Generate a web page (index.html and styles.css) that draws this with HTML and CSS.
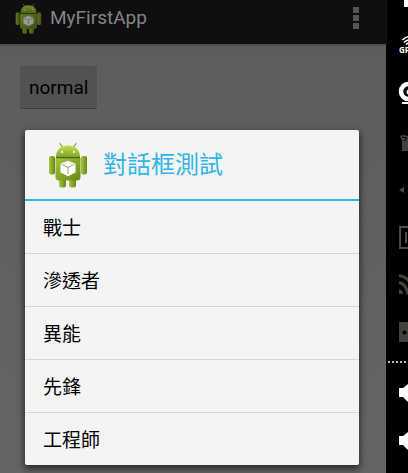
FILE: index.html
```html
<!DOCTYPE html>
<html lang="zh-Hant">
<head>
<meta charset="utf-8">
<meta name="viewport" content="width=device-width, initial-scale=1">
<title>MyFirstApp</title>
<link rel="stylesheet" href="styles.css">
</head>
<body>
<svg class="defs" aria-hidden="true">
  <defs>
    <linearGradient id="head" x1="0" y1="0" x2="0" y2="1">
      <stop offset="0" stop-color="#bfe052"/>
      <stop offset="1" stop-color="#84a526"/>
    </linearGradient>
    <linearGradient id="body" x1="0" y1="0" x2="1" y2="1">
      <stop offset="0" stop-color="#a3c63a"/>
      <stop offset="1" stop-color="#6a8818"/>
    </linearGradient>
    <linearGradient id="limb" x1="0" y1="0" x2="1" y2="0">
      <stop offset="0" stop-color="#a4c93a"/>
      <stop offset="1" stop-color="#68851a"/>
    </linearGradient>
    <symbol id="robot" viewBox="0 0 40 46">
      <path d="M12 1.500l2.500 4M28 1.500l-2.500 4" stroke="#8bab2c" stroke-width="1.200" stroke-linecap="round"/>
      <rect x="11" y="33" width="7" height="12.500" rx="2.500" fill="url(#limb)"/>
      <rect x="21" y="33" width="7" height="12.500" rx="2.500" fill="url(#limb)"/>
      <rect x="1" y="14" width="6" height="18.500" rx="2" fill="url(#limb)"/>
      <rect x="33" y="14" width="6" height="18.500" rx="2" fill="url(#limb)"/>
      <path d="M8 15C8 7.500 13 3.500 20 3.500S32 7.500 32 15Z" fill="url(#head)"/>
      <path d="M7.500 16h25v19q0 3.500-3.500 3.500H11q-3.500 0-3.500-3.500z" fill="url(#body)"/>
      <path d="M8 15h24v1.200H8z" fill="#4a6210"/>
      <circle cx="14" cy="10" r="1.100" fill="#fff"/>
      <circle cx="26" cy="10" r="1.100" fill="#fff"/>
      <path d="M20 18.800l7.500 3v8.700L20 34.200l-7.500-3.700v-8.700z" fill="#fff"/>
      <path d="M13.500 22.300l6.500 3.200 6.500-3.200M20 25.500v6.500" fill="none" stroke="#7b8f45" stroke-width=".8"/>
    </symbol>
  </defs>
</svg>
<div class="emulator">
  <main class="app">
    <header class="bar">
      <svg class="bar-icon" aria-hidden="true"><use href="#robot"/></svg>
      <h1 class="bar-title">MyFirstApp</h1>
      <button class="overflow" type="button" aria-label="More options"><i></i><i></i><i></i></button>
    </header>
    <div class="content">
      <button class="normal" type="button">normal</button>
    </div>
    <section class="dialog" role="dialog" aria-labelledby="dialog-title">
      <div class="dialog-head">
        <svg class="dialog-icon" aria-hidden="true"><use href="#robot"/></svg>
        <h2 class="dialog-title" id="dialog-title">對話框測試</h2>
      </div>
      <ul class="options">
        <li><button type="button">戰士</button></li>
        <li><button type="button">滲透者</button></li>
        <li><button type="button">異能</button></li>
        <li><button type="button">先鋒</button></li>
        <li><button type="button">工程師</button></li>
      </ul>
    </section>
  </main>
  <aside class="rail">
    <button class="tool tool-first" type="button" aria-label="Battery">
      <svg viewBox="0 0 22 20"><path d="M18 0h10v7H18z" fill="#fff"/></svg>
    </button>
    <button class="tool" type="button" aria-label="Location">
      <svg viewBox="0 0 22 48">
        <g fill="none" stroke="#fff" stroke-width="1.500"><path d="M16.500 20q3-3.500 8-3.500M18 22.500q3-3 7-3M20 24.500q2-2 5-2"/></g>
        <text x="13" y="33" class="gps">GPS</text>
      </svg>
    </button>
    <button class="tool" type="button" aria-label="Camera">
      <svg viewBox="0 0 22 48">
        <circle cx="22.500" cy="23.500" r="7.500" fill="none" stroke="#fff" stroke-width="4.500"/>
        <circle cx="23" cy="24" r="2.500" fill="#fff"/>
        <path d="M16 34h10v2H16z" fill="#fff"/>
      </svg>
    </button>
    <button class="tool" type="button" aria-label="Screen capture">
      <svg viewBox="0 0 22 48"><path d="M16 35V24l-2-4 3-1 5 1v15z" fill="#42423d"/><path d="M16 21l5 1-3 3" fill="none" stroke="#000"/></svg>
    </button>
    <button class="tool" type="button" aria-label="Remote control">
      <svg viewBox="0 0 22 48"><path d="M13 26l5-3v6z" fill="#4a4a46"/></svg>
    </button>
    <button class="tool" type="button" aria-label="Identifiers">
      <svg viewBox="0 0 22 48"><g fill="none" stroke="#4a4a46" stroke-width="2"><path d="M24 15H14v21h10M20 20v11"/></g></svg>
    </button>
    <button class="tool" type="button" aria-label="Network">
      <svg viewBox="0 0 22 48"><g fill="none" stroke="#42423d" stroke-width="3"><path d="M13 15.500q10 1 16 15M13 22.500q7 1 9 12"/></g><path d="M13 29q4 1 4 5h-4z" fill="#42423d"/></svg>
    </button>
    <button class="tool" type="button" aria-label="Multi-touch">
      <svg viewBox="0 0 22 48"><path d="M13 14h9v20h-9z" fill="#42423d"/><circle cx="18.500" cy="24.500" r="2" fill="#000"/></svg>
    </button>
    <div class="divider"></div>
    <button class="tool" type="button" aria-label="Volume up">
      <svg viewBox="0 0 22 48"><path d="M13 19h4l5-4v18l-5-5h-4z" fill="#fff"/></svg>
    </button>
    <button class="tool" type="button" aria-label="Volume down">
      <svg viewBox="0 0 22 48"><path d="M13 19h4l5-4v18l-5-5h-4z" fill="#fff"/></svg>
    </button>
  </aside>
</div>
</body>
</html>
```
FILE: styles.css
```css
* { box-sizing: border-box; }

body {
  margin: 0;
  font-family: Roboto, "Noto Sans CJK TC", sans-serif;
}

button {
  padding: 0;
  border: 0;
  background: none;
  font: inherit;
  color: inherit;
}

svg { display: block; }

.defs {
  position: absolute;
  width: 0;
  height: 0;
}

.emulator {
  display: grid;
  grid-template-columns: 1fr 22px;
  height: 100vh;
  overflow: hidden;
}

.app {
  position: relative;
  background: linear-gradient(#5c5c5c, #656565);
}

.bar {
  display: flex;
  align-items: center;
  height: 44px;
  padding: 0 27px 8px 15px;
  background: #0f0f0f;
  box-shadow: 0 1px 2px #404040;
}

.bar-icon {
  width: 27px;
  height: 31px;
  filter: brightness(0.6);
}

.bar-title {
  flex: 1;
  margin: 0 0 0 8px;
  font-size: 19px;
  font-weight: 400;
  line-height: 24px;
  color: #858585;
}

.overflow {
  display: grid;
  gap: 2px;
}

.overflow i {
  width: 6px;
  height: 6px;
  background: #555;
}

.content { padding: 22px 20px; }

.normal {
  padding: 2px 9px 0;
  border-bottom: 1px solid #3d3d3d;
  border-radius: 2px;
  background: #525252;
  box-shadow: 0 0 1px #6d6d6d;
  font-size: 19px;
  line-height: 40px;
  color: #000;
}

.dialog {
  position: absolute;
  top: 130px;
  left: 25px;
  right: 27px;
  border-radius: 2px;
  background: #f4f4f4;
  box-shadow: 0 3px 7px 1px rgba(0, 0, 0, 0.6);
  color: #000;
}

.dialog-head {
  display: flex;
  align-items: center;
  height: 71px;
  padding: 0 23px;
  border-bottom: 2px solid #33b5e5;
}

.dialog-icon {
  width: 40px;
  height: 46px;
}

.dialog-title {
  margin: 0 0 0 15px;
  font-size: 24px;
  font-weight: 400;
  line-height: 32px;
  color: #33b5e5;
}

.options {
  margin: 0;
  padding: 0;
  list-style: none;
}

.options li + li { border-top: 1px solid #d6d6d6; }

.options button {
  display: block;
  width: 100%;
  padding: 3px 18px 0;
  font-size: 19px;
  line-height: 49px;
  text-align: left;
}

.rail {
  overflow: hidden;
  background: #000;
}

.tool {
  display: block;
  width: 100%;
  height: 48px;
}

.tool-first { height: 20px; }

.tool svg {
  width: 100%;
  height: 100%;
}

.gps {
  font-family: "Open Sans", sans-serif;
  font-size: 8px;
  font-weight: 700;
  fill: #fff;
}

.divider {
  height: 2px;
  margin: 5px 0 6px 2px;
  background: repeating-linear-gradient(90deg, #bbb 0 2px, #000 2px 4px);
}
```
